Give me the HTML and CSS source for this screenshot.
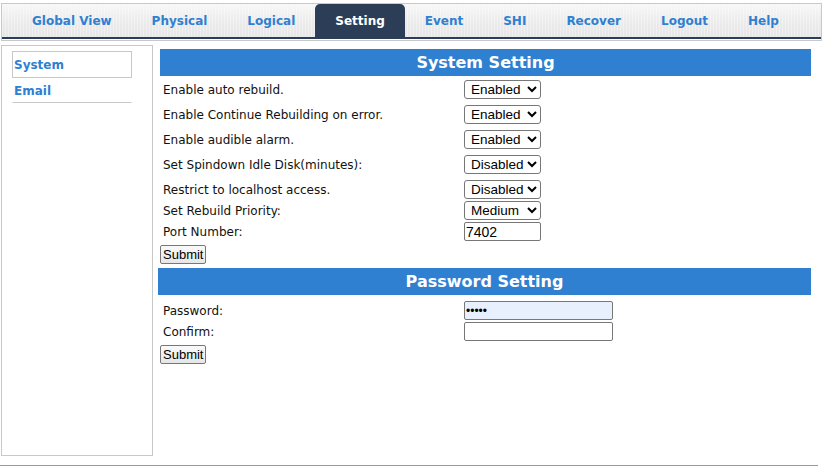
FILE: index.html
```html
<!DOCTYPE html>
<html>
<head>
<meta charset="utf-8">
<link rel="stylesheet" href="styles.css">
</head>
<body>
<div class="header">
  <div class="tabbar">
    <a class="tab">Global View</a>
    <a class="tab">Physical</a>
    <a class="tab">Logical</a>
    <a class="tab active">Setting</a>
    <a class="tab">Event</a>
    <a class="tab">SHI</a>
    <a class="tab">Recover</a>
    <a class="tab">Logout</a>
    <a class="tab">Help</a>
  </div>
</div>
<div class="main">
  <div class="sidebar">
    <a class="side-item selected">System</a>
    <a class="side-item">Email</a>
  </div>
  <div class="content">
    <div class="section-title">System Setting</div>
    <div class="form first">
      <div class="row"><span class="label">Enable auto rebuild.</span><select class="sel"><option>Enabled</option><option>Disabled</option></select></div>
      <div class="row spaced"><span class="label">Enable Continue Rebuilding on error.</span><select class="sel"><option>Enabled</option><option>Disabled</option></select></div>
      <div class="row spaced"><span class="label">Enable audible alarm.</span><select class="sel"><option>Enabled</option><option>Disabled</option></select></div>
      <div class="row spaced"><span class="label">Set Spindown Idle Disk(minutes):</span><select class="sel"><option>Disabled</option><option>10</option></select></div>
      <div class="row spaced"><span class="label">Restrict to localhost access.</span><select class="sel"><option>Disabled</option><option>Enabled</option></select></div>
      <div class="row"><span class="label">Set Rebuild Priority:</span><select class="sel"><option>Medium</option><option>High</option><option>Low</option></select></div>
      <div class="row"><span class="label">Port Number:</span><input class="txt short" type="text" value="7402"></div>
      <div class="btnrow"><button class="btn">Submit</button></div>
    </div>
    <div class="section-title second">Password Setting</div>
    <div class="form pw">
      <div class="row"><span class="label">Password:</span><input class="txt long filled" type="password" value="12345"></div>
      <div class="row"><span class="label">Confirm:</span><input class="txt long" type="password" value=""></div>
      <div class="btnrow"><button class="btn">Submit</button></div>
    </div>
  </div>
</div>
<div class="footer"></div>
</body>
</html>
```

FILE: styles.css
```css
html, body {
  margin: 0;
  padding: 0;
  background: #fff;
  font-family: "DejaVu Sans", Verdana, sans-serif;
  width: 830px;
  height: 466px;
  overflow: hidden;
}

.header {
  margin: 3px 0 0 1px;
  width: 819px;
  border: 1px solid #c8c8c8;
  height: 36px;
  background: #fff;
}

.tabbar {
  height: 33px;
  border-bottom: 2px solid #2c3e57;
  background:
    repeating-linear-gradient(90deg, rgba(255,255,255,0.35) 0 1px, rgba(0,0,0,0) 1px 3px),
    linear-gradient(#f7f7f7, #ececec 50%, #e6e6e8);
  display: flex;
  align-items: flex-end;
  padding-left: 10px;
}

.tab {
  display: block;
  padding: 0 20px;
  height: 33px;
  line-height: 35px;
  font-size: 12px;
  font-weight: bold;
  color: #2f80d1;
  white-space: nowrap;
}

.tab.active {
  background: #2c3e57;
  color: #fff;
  border-radius: 5px 5px 0 0;
  height: 33px;
  line-height: 34px;
}

.main {
  display: flex;
  height: 416px;
}

.sidebar {
  margin-top: 4px;
  margin-left: 1px;
  width: 152px;
  height: 411px;
  border: 1px solid #c8c8c8;
  padding: 5px 0 0 10px;
  box-sizing: border-box;
  display: flex;
  flex-direction: column;
}

.side-item {
  display: block;
  width: 120px;
  box-sizing: border-box;
  font-size: 12px;
  font-weight: bold;
  color: #2f80d1;
  padding: 0 0 0 1px;
  height: 25px;
  line-height: 24px;
  border: 1px solid transparent;
  border-bottom: 1px solid #c8c8c8;
}

.side-item.selected {
  border: 1px solid #c8c8c8;
  height: 27px;
  line-height: 26px;
}

.content {
  flex: 1;
  padding: 8px 9px 0 7px;
  margin-right: 10px;
}

.section-title {
  background: #2f80d1;
  color: #fff;
  font-weight: bold;
  font-size: 16px;
  height: 27px;
  line-height: 28px;
  text-align: center;
}

.section-title.second {
  margin-left: -2px;
  margin-top: 3px;
}

.form {
  padding-left: 3px;
  font-size: 12px;
  color: #111;
}

.form.first {
  padding-top: 3px;
}

.form.pw {
  padding-top: 5px;
}

.row {
  display: flex;
  align-items: center;
  height: 21px;
}

.row.spaced {
  margin-top: 4px;
}

.label {
  width: 301px;
  flex: none;
}

.sel {
  font-family: "Liberation Sans", Arial, sans-serif;
  font-size: 13.5px;
  width: 77px;
  height: 19px;
  padding: 0 0 0 2px;
  border: 1px solid #777;
  border-radius: 3px;
  background: #fff;
  color: #000;
  margin: 0;
}

.txt {
  font-family: "Liberation Sans", Arial, sans-serif;
  font-size: 14px;
  height: 19px;
  box-sizing: border-box;
  border: 1px solid #777;
  border-radius: 2px;
  padding: 0 1px;
  margin: 0;
  color: #000;
  background: #fff;
}

.txt.short {
  width: 77px;
}

.txt.long {
  width: 149px;
}

.txt.filled {
  background: #e8f0fe;
  font-size: 12px;
}

.btnrow {
  height: 21px;
  margin-top: 2px;
  display: flex;
  align-items: center;
  margin-left: -3px;
}

.btn {
  font-family: "Liberation Sans", Arial, sans-serif;
  font-size: 13px;
  height: 19px;
  padding: 0 2px;
  border: 1px solid #777;
  border-radius: 2px;
  background: linear-gradient(#fafafa, #e6e6e6);
  color: #000;
  margin: 0;
}

.footer {
  margin-top: 8px;
  width: 818px;
  border-top: 2px solid #9a9a9a;
}
```
